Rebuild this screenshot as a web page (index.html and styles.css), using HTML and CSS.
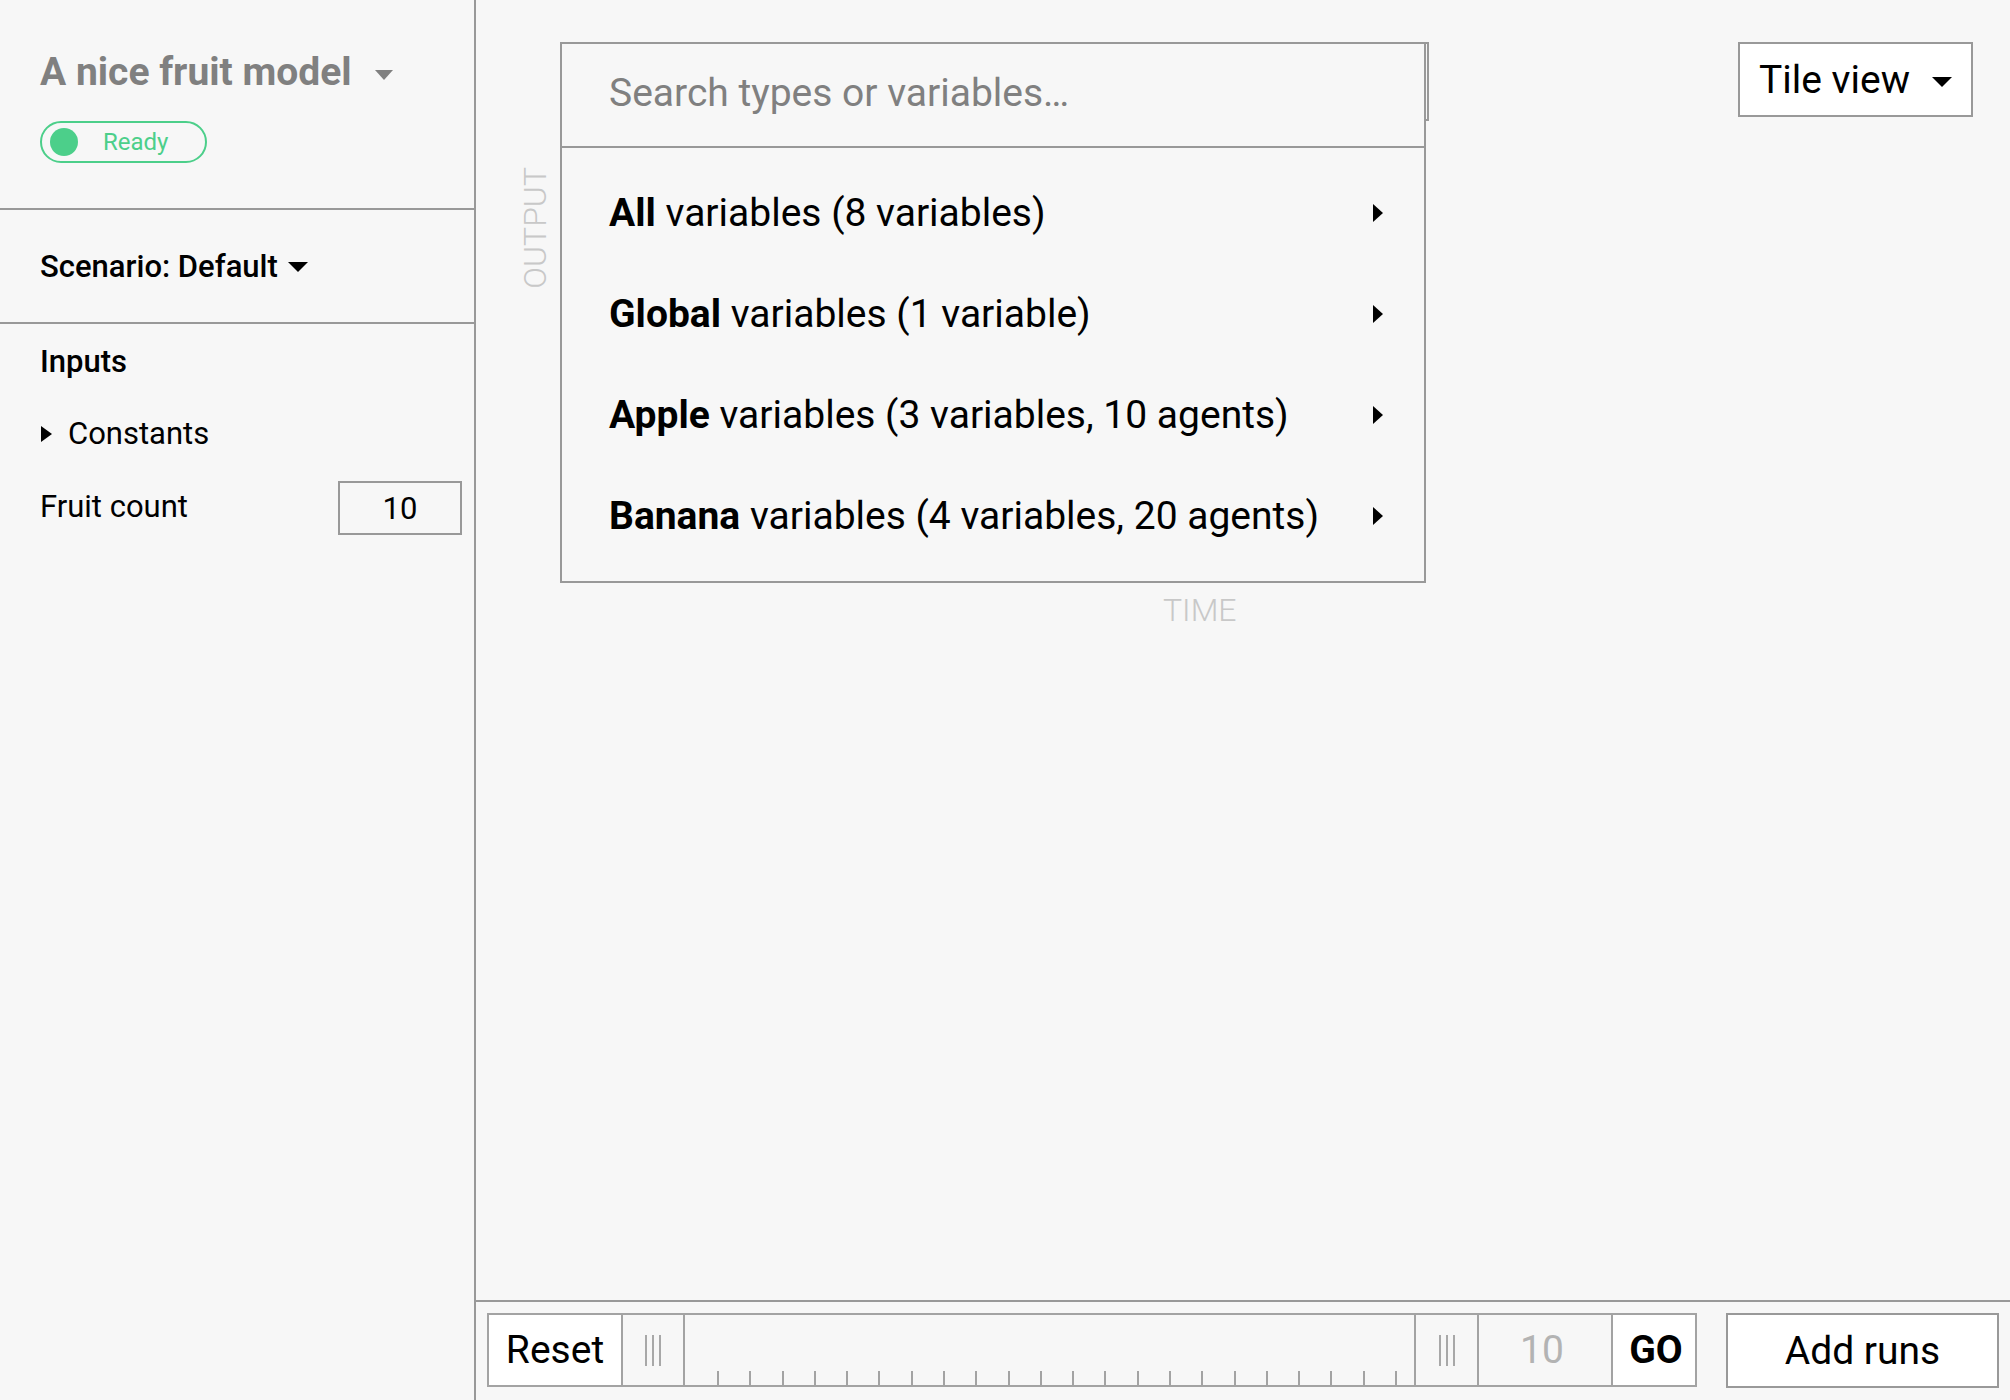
FILE: index.html
```html
<!DOCTYPE html>
<html>
<head>
<meta charset="utf-8">
<link rel="stylesheet" href="styles.css">
</head>
<body>
<div class="app">
  <aside class="sidebar">
    <section class="side-head">
      <div class="model-title">
        <span>A nice fruit model</span>
        <span class="caret caret-gray"></span>
      </div>
      <div class="status-pill">
        <span class="status-dot"></span>
        <span class="status-text">Ready</span>
      </div>
    </section>
    <section class="side-scenario">
      <span>Scenario: Default</span>
      <span class="caret caret-black"></span>
    </section>
    <section class="side-inputs">
      <div class="inputs-title">Inputs</div>
      <div class="constants-row">
        <span class="tri-right tri-small"></span>
        <span>Constants</span>
      </div>
      <div class="field-row">
        <span>Fruit count</span>
        <div class="num-box">10</div>
      </div>
    </section>
  </aside>

  <main class="main">
    <div class="stage">
      <div class="ylabel">OUTPUT</div>
      <div class="plotcol">
        <div class="plot">
          <div class="dropdown">
            <div class="search">Search types or variables…</div>
            <ul class="var-list">
              <li class="var-row"><span><b>All</b> variables (8 variables)</span><span class="tri-right"></span></li>
              <li class="var-row"><span><b>Global</b> variables (1 variable)</span><span class="tri-right"></span></li>
              <li class="var-row"><span><b>Apple</b> variables (3 variables, 10 agents)</span><span class="tri-right"></span></li>
              <li class="var-row"><span><b>Banana</b> variables (4 variables, 20 agents)</span><span class="tri-right"></span></li>
            </ul>
          </div>
          <div class="view-select">
            <span>Tile view</span>
            <span class="caret caret-black"></span>
          </div>
        </div>
        <div class="xlabel">TIME</div>
      </div>
    </div>

    <div class="bottombar">
      <div class="runner">
        <div class="seg seg-reset">Reset</div>
        <div class="seg seg-grip"><i></i><i></i><i></i></div>
        <div class="seg seg-track">
          <i></i><i></i><i></i><i></i><i></i><i></i><i></i><i></i><i></i><i></i><i></i>
          <i></i><i></i><i></i><i></i><i></i><i></i><i></i><i></i><i></i><i></i><i></i>
        </div>
        <div class="seg seg-grip seg-grip2"><i></i><i></i><i></i></div>
        <div class="seg seg-num">10</div>
        <div class="seg seg-go">GO</div>
      </div>
      <div class="add-runs">Add runs</div>
    </div>
  </main>
</div>
</body>
</html>
```

FILE: styles.css
```css
* { box-sizing: border-box; }

html, body {
  margin: 0;
  padding: 0;
  background: #f7f7f7;
}

body {
  font-family: Roboto, "Liberation Sans", Arial, sans-serif;
  color: #000;
}

.app {
  display: flex;
  width: 2010px;
  height: 1400px;
  overflow: hidden;
}

/* ---------- sidebar ---------- */
.sidebar {
  width: 476px;
  flex: none;
  border-right: 2px solid #999;
  display: flex;
  flex-direction: column;
}

.side-head {
  padding: 48px 0 45px 40px;
  border-bottom: 2px solid #999;
}

.model-title {
  display: flex;
  align-items: center;
  font-size: 39px;
  line-height: 48px;
  font-weight: 700;
  color: #808080;
}

.caret {
  display: inline-block;
  width: 0;
  height: 0;
  border-top: 10px solid #000;
  border-left: 10px solid transparent;
  border-right: 10px solid transparent;
}

.caret-gray {
  border-top-color: #808080;
  border-left-width: 9px;
  border-right-width: 9px;
  margin: 6px 0 0 23px;
}

.caret-black { border-top-color: #000; }

.status-pill {
  margin-top: 25px;
  width: 167px;
  height: 42px;
  border: 2px solid #4ccf8a;
  border-radius: 21px;
  display: flex;
  align-items: center;
  padding-left: 8px;
}

.status-dot {
  width: 28px;
  height: 28px;
  border-radius: 50%;
  background: #4ccf8a;
  flex: none;
}

.status-text {
  margin-left: 25px;
  font-size: 24px;
  color: #4ccf8a;
}

.side-scenario {
  height: 114px;
  border-bottom: 2px solid #999;
  display: flex;
  align-items: center;
  padding-left: 40px;
  font-size: 31px;
  font-weight: 500;
}

.side-scenario .caret { margin-left: 10px; margin-top: 2px; }

.side-inputs {
  padding: 19px 12px 0 40px;
  font-size: 31px;
  line-height: 37px;
}

.inputs-title {
  font-weight: 500;
}

.constants-row {
  margin-top: 35px;
  display: flex;
  align-items: center;
}

.tri-right {
  display: inline-block;
  width: 0;
  height: 0;
  border-left: 10px solid #000;
  border-top: 9px solid transparent;
  border-bottom: 9px solid transparent;
}

.tri-small {
  border-left-width: 11px;
  border-top-width: 8px;
  border-bottom-width: 8px;
  margin: 0 16px 0 1px;
}

.field-row {
  margin-top: 29px;
  display: flex;
  align-items: center;
  justify-content: space-between;
}

.field-row > span { margin-top: -4px; }

.num-box {
  width: 124px;
  height: 54px;
  border: 2px solid #999;
  display: flex;
  align-items: center;
  justify-content: center;
  font-size: 31px;
}

/* ---------- main ---------- */
.main {
  flex: 1;
  display: flex;
  flex-direction: column;
  min-width: 0;
}

.stage {
  flex: 1;
  display: flex;
  align-items: flex-start;
  padding: 42px 37px 0 0;
}

.ylabel {
  writing-mode: vertical-rl;
  transform: rotate(180deg);
  margin: 125px 9px 0 43px;
  font-size: 32px;
  line-height: 32px;
  font-weight: 300;
  color: #c8c8c8;
  flex: none;
}

.plotcol {
  flex: 1;
  display: flex;
  flex-direction: column;
}

.plot {
  display: flex;
  justify-content: space-between;
  align-items: flex-start;
}

.dropdown {
  position: relative;
  width: 866px;
  border: 2px solid #999;
}

.dropdown::after {
  content: "";
  position: absolute;
  top: -2px;
  right: -5px;
  width: 3px;
  height: 75px;
  border-top: 2px solid #999;
  border-right: 2px solid #999;
  border-bottom: 2px solid #999;
}

.search {
  height: 104px;
  padding: 26px 0 0 47px;
  border-bottom: 2px solid #999;
  font-size: 39px;
  color: #808080;
}

.var-list {
  list-style: none;
  margin: 0;
  padding: 14px 0 15px;
}

.var-row {
  height: 101px;
  display: flex;
  align-items: center;
  justify-content: space-between;
  padding: 0 41px 0 47px;
  font-size: 39px;
}

.var-row b { font-weight: 700; }

.view-select {
  width: 235px;
  height: 75px;
  border: 2px solid #999;
  background: #fff;
  display: flex;
  align-items: center;
  justify-content: space-between;
  padding: 0 19px 0 19px;
  font-size: 39px;
}

.view-select .caret { margin-top: 4px; }

.xlabel {
  margin-top: 8px;
  padding-left: 603px;
  font-size: 32px;
  font-weight: 300;
  color: #c8c8c8;
}

/* ---------- bottom bar ---------- */
.bottombar {
  flex: none;
  border-top: 2px solid #999;
  padding: 11px 11px 12px 11px;
  display: flex;
  gap: 29px;
}

.runner {
  flex: 1;
  height: 74px;
  border: 2px solid #a3a3a3;
  display: flex;
}

.seg {
  display: flex;
  align-items: center;
  justify-content: center;
  font-size: 39px;
  border-left: 2px solid #a3a3a3;
}

.seg-reset {
  width: 132px;
  border-left: none;
  background: #fff;
}

.seg-grip {
  width: 62px;
  gap: 5px;
}

.seg-grip2 { width: 63px; }

.seg-grip i {
  display: block;
  width: 2px;
  height: 31px;
  background: #a8a8a8;
}

.seg-track {
  flex: 1;
  align-items: flex-end;
  justify-content: space-between;
  padding: 0 17px 0 32px;
}

.seg-track i {
  display: block;
  width: 2px;
  height: 14px;
  background: #a3a3a3;
}

.seg-num {
  width: 134px;
  color: #b3b3b3;
  padding-right: 6px;
}

.seg-go {
  width: 84px;
  background: #fff;
  font-weight: 700;
  padding-left: 4px;
}

.add-runs {
  width: 273px;
  height: 75px;
  border: 2px solid #999;
  background: #fff;
  display: flex;
  align-items: center;
  justify-content: center;
  font-size: 39px;
}
```
